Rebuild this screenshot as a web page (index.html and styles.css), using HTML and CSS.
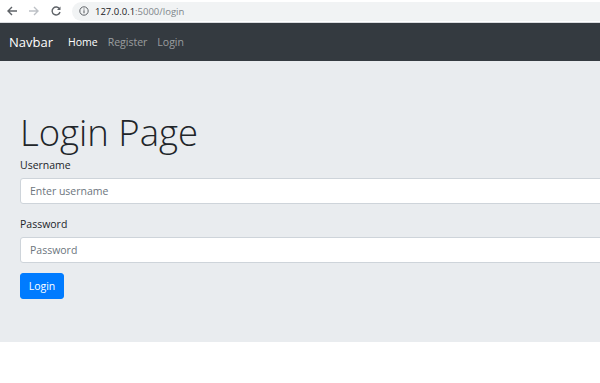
FILE: index.html
```html
<!DOCTYPE html>
<html lang="en">
<head>
  <meta charset="UTF-8" />
  <meta name="viewport" content="width=device-width, initial-scale=1.0" />
  <title>Login</title>
  <link rel="stylesheet" href="styles.css">
</head>
<body>
  <div class="chrome">
    <svg class="nav-icon" width="12" height="12" viewBox="0 0 12 12"><path d="M11 6H2M6 2L2 6l4 4" fill="none" stroke="#5f6368" stroke-width="1.4"/></svg>
    <svg class="nav-icon" width="12" height="12" viewBox="0 0 12 12"><path d="M1 6h9M6 2l4 4-4 4" fill="none" stroke="#bdc1c6" stroke-width="1.4"/></svg>
    <svg class="nav-icon" width="12" height="12" viewBox="0 0 12 12"><path d="M9.6 4A4 4 0 1 0 10 7" fill="none" stroke="#5f6368" stroke-width="1.4"/><path d="M10.5 1.5v3.5H7z" fill="#5f6368"/></svg>
    <div class="omnibox">
      <svg width="10" height="10" viewBox="0 0 10 10"><circle cx="5" cy="5" r="4.2" fill="none" stroke="#5f6368" stroke-width="1"/><path d="M5 4.3v3M5 2.6v.9" stroke="#5f6368" stroke-width="1.1"/></svg>
      <span class="host">127.0.0.1</span><span class="path">:5000/login</span>
    </div>
  </div>

  <nav class="navbar">
    <a class="brand" href="#">Navbar</a>
    <a class="nav-link active" href="#">Home</a>
    <a class="nav-link" href="#">Register</a>
    <a class="nav-link" href="#">Login</a>
  </nav>

  <div class="jumbotron">
    <h1>Login Page</h1>
    <form>
      <div class="form-group">
        <label for="username">Username</label>
        <input type="text" id="username" placeholder="Enter username" />
      </div>
      <div class="form-group">
        <label for="password">Password</label>
        <input type="password" id="password" placeholder="Password" />
      </div>
      <button type="button" class="btn">Login</button>
    </form>
  </div>
</body>
</html>
```

FILE: styles.css
```css
* {
  margin: 0;
  padding: 0;
  box-sizing: border-box;
}

html, body {
  width: 100%;
  height: 100%;
  overflow: hidden;
  background: #fff;
  font-family: "Open Sans", "Noto Sans", sans-serif;
  color: #212529;
}

.chrome {
  height: 23px;
  display: flex;
  align-items: center;
  padding-left: 6px;
  background: #fff;
  border-bottom: 1px solid #dadce0;
}

.nav-icon {
  margin-right: 10px;
}

.omnibox {
  flex: 1;
  height: 19px;
  display: flex;
  align-items: center;
  gap: 6px;
  padding-left: 7px;
  background: #f1f3f4;
  border-radius: 10px 0 0 10px;
  font-size: 9.5px;
}

.omnibox .host {
  color: #202124;
}

.omnibox .path {
  color: #80868b;
  margin-left: -6px;
}

.navbar {
  height: 38px;
  display: flex;
  align-items: center;
  padding: 0 11px 0 9px;
  background: #343a40;
}

.navbar a {
  text-decoration: none;
}

.brand {
  color: #fff;
  font-size: 13px;
  margin-right: 15px;
}

.nav-link {
  color: rgba(255, 255, 255, 0.5);
  font-size: 10.5px;
  margin-right: 10px;
}

.nav-link.active {
  color: #fff;
}

.jumbotron {
  background: #e9ecef;
  padding: 50px 0 0 20px;
  height: 281px;
}

.jumbotron h1 {
  font-size: 36.5px;
  font-weight: 300;
  line-height: 1.2;
  margin-bottom: 3px;
}

.form-group {
  margin-bottom: 13px;
}

.form-group:last-of-type {
  margin-bottom: 10px;
}

label {
  display: block;
  font-size: 10.5px;
  margin-bottom: 6px;
}

input {
  display: block;
  width: 700px;
  height: 26px;
  padding: 0 9px;
  font-family: inherit;
  font-size: 10.5px;
  color: #495057;
  background: #fff;
  border: 1px solid #ced4da;
  border-radius: 3px;
}

input::placeholder {
  color: #6c757d;
}

.btn {
  width: 44px;
  height: 26px;
  font-family: inherit;
  font-size: 10.5px;
  color: #fff;
  background: #007bff;
  border: 1px solid #007bff;
  border-radius: 3px;
}
```
